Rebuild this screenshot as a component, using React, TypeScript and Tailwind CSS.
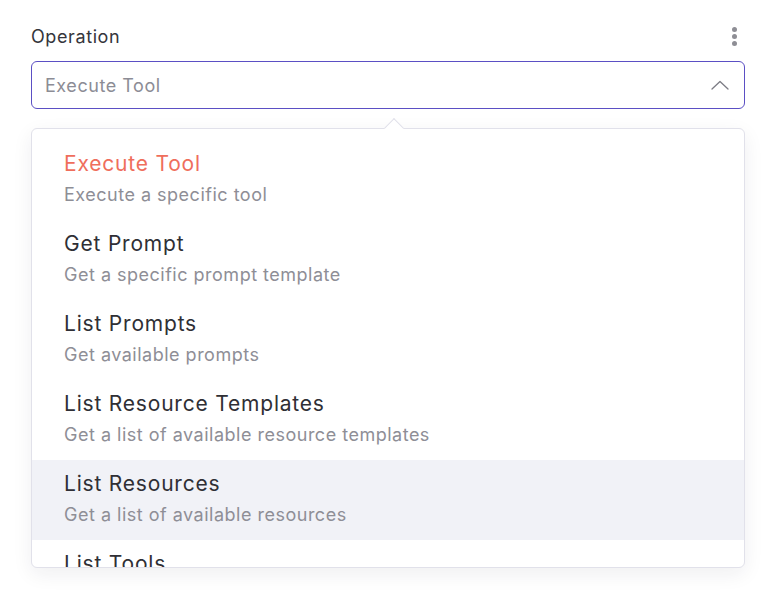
const options = [
  { title: "Execute Tool", desc: "Execute a specific tool" },
  { title: "Get Prompt", desc: "Get a specific prompt template" },
  { title: "List Prompts", desc: "Get available prompts" },
  { title: "List Resource Templates", desc: "Get a list of available resource templates" },
  { title: "List Resources", desc: "Get a list of available resources" },
  { title: "List Tools", desc: "Get a list of available tools" },
]

function App() {
  return (
    <main className="h-[616px] w-full overflow-hidden bg-white pl-[31px] pr-[27px] pt-[24px] font-['Inter',sans-serif]">
      <div className="flex items-center justify-between">
        <span className="pt-[1px] text-[18px] leading-[24px] tracking-[0.6px] text-[#35353b]">Operation</span>
        <button className="mr-[8px] flex flex-col gap-[2px]">
          <span className="h-[5px] w-[5px] rounded-full bg-[#8e8e95]" />
          <span className="h-[5px] w-[5px] rounded-full bg-[#8e8e95]" />
          <span className="h-[5px] w-[5px] rounded-full bg-[#8e8e95]" />
        </button>
      </div>

      <div className="mt-[12px] flex h-[48px] items-center justify-between rounded-[6px] border border-[#5b4fc4] pl-[13px] pr-[15px]">
        <span className="text-[18px] tracking-[0.55px] text-[#8c8c95]">Execute Tool</span>
        <svg width="18" height="10" viewBox="0 0 18 10" fill="none" className="mb-[1px]">
          <polyline points="1,9 9,1.5 17,9" stroke="#7c7c84" strokeWidth="1.3" strokeLinecap="round" strokeLinejoin="round" />
        </svg>
      </div>

      <div className="relative mt-[19px]">
        <div className="absolute left-[356px] top-[-7px] z-10 h-[14px] w-[14px] rotate-45 border-l border-t border-[#e1e1ea] bg-white" />
        <div className="h-[440px] overflow-hidden rounded-[6px] border border-[#e1e1ea] bg-white pt-[11px] shadow-[0_6px_20px_rgba(30,30,60,0.07)]">
          {options.map((o, i) => (
            <div
              key={o.title}
              className={`flex h-[80px] flex-col px-[32px] pt-[10px] ${i === 4 ? "bg-[#f1f2f7]" : ""}`}
            >
              <span
                className={`text-[21px] leading-[27px] tracking-[0.8px] ${i === 0 ? "text-[#ef6e5c]" : "text-[#2f2f35]"}`}
              >
                {o.title}
              </span>
              <span className="mt-[6px] text-[18px] leading-[24px] tracking-[0.5px] text-[#8e8e96]">{o.desc}</span>
            </div>
          ))}
        </div>
      </div>
    </main>
  )
}

export default App
